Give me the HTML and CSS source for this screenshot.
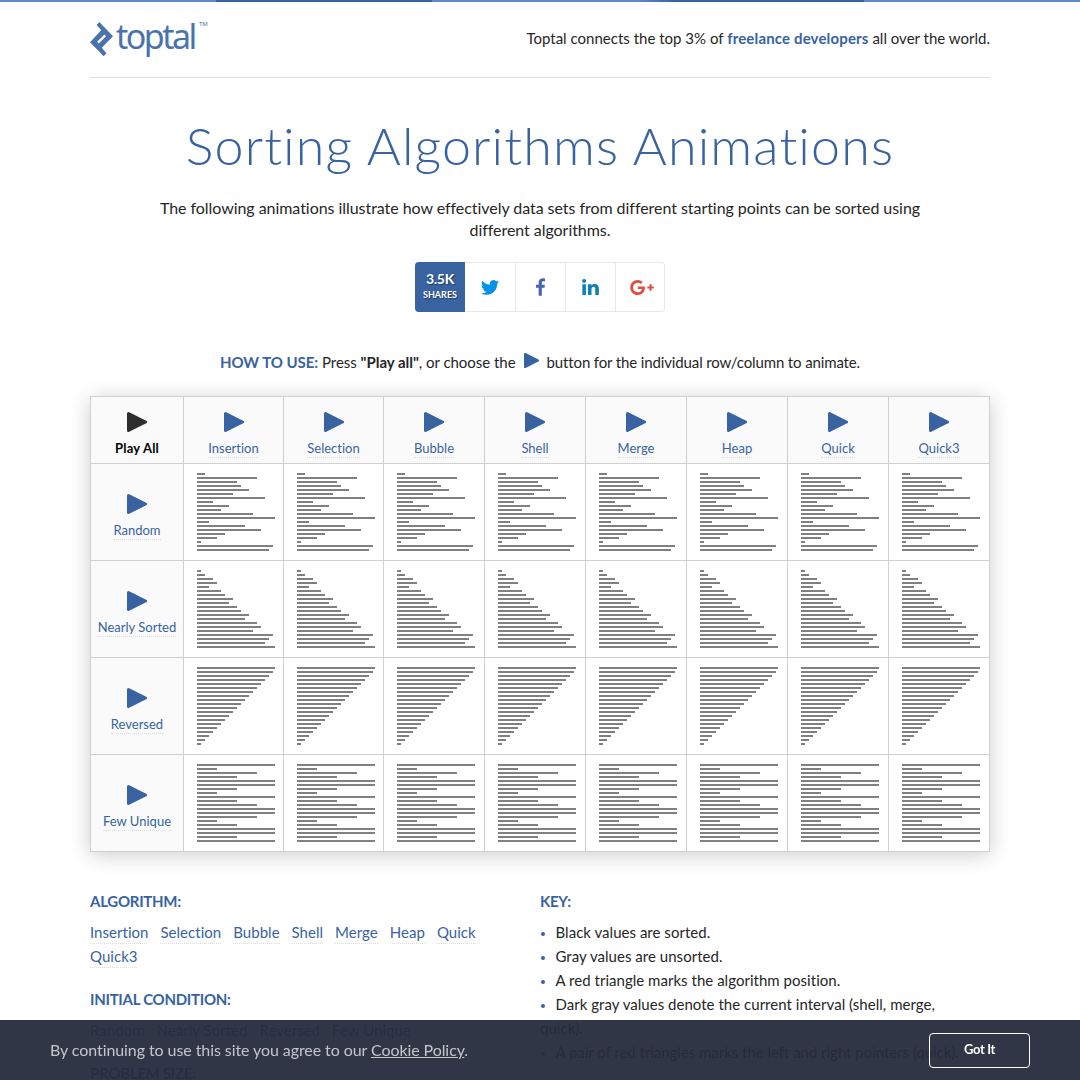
FILE: index.html
```html
<!DOCTYPE html>
<html lang="en">
<head>
<meta charset="utf-8">
<title>Sorting Algorithms Animations</title>
<link rel="stylesheet" href="styles.css">
</head>
<body>
<svg class="defs" aria-hidden="true">
  <symbol id="play" viewBox="0 0 20 20"><path d="M1.5 1.5 18.5 10 1.5 18.5Z" fill="currentColor" stroke="currentColor" stroke-width="3" stroke-linejoin="round"/></symbol>
</svg>
<div class="stripe"></div>
<div class="page">
  <header class="header">
    <a class="logo">
      <svg class="logo-mark" viewBox="0 0 23 35"><path fill-rule="evenodd" d="M9.3 0 23 14.3 11.8 25.7 16.4 31.200 13.700 34.200 0 20.200 11.200 8.300 6.600 3Z M14.500 12.500 7.100 19.800 8.700 21.500 16 14.200Z"/></svg>
      <span class="logo-word">toptal</span><span class="logo-tm">TM</span>
    </a>
    <p class="tagline">Toptal connects the top 3% of <b>freelance developers</b> all over the world.</p>
  </header>

  <h1>Sorting Algorithms Animations</h1>
  <p class="intro">The following animations illustrate how effectively data sets from different starting points can be sorted using<br>different algorithms.</p>

  <div class="share">
    <div class="share-count"><b>3.5K</b><span>SHARES</span></div>
    <a class="tw"><svg width="18" height="15" viewBox="0 2.25 24 19.5"><path d="M23.953 4.570a10 10 0 01-2.825.775 4.958 4.958 0 002.163-2.723c-.951.555-2.005.959-3.127 1.184a4.920 4.920 0 00-8.384 4.482C7.690 8.095 4.067 6.130 1.640 3.162a4.822 4.822 0 00-.666 2.475c0 1.710.870 3.213 2.188 4.096a4.904 4.904 0 01-2.228-.616v.060a4.923 4.923 0 003.946 4.827 4.996 4.996 0 01-2.212.085 4.936 4.936 0 004.604 3.417 9.867 9.867 0 01-6.102 2.105c-.390 0-.779-.023-1.170-.067a13.995 13.995 0 007.557 2.209c9.053 0 13.998-7.496 13.998-13.985 0-.210 0-.420-.015-.630A9.935 9.935 0 0024 4.590z"/></svg></a>
    <a class="fb"><svg width="9" height="18" viewBox="95 0 864 1664"><path d="M959 12v264h-157q-86 0-116 36t-30 108v189h293l-39 296h-254v759h-306v-759h-255v-296h255v-218q0-186 104-288.500t277-102.500q147 0 228 12z"/></svg></a>
    <a class="li"><svg width="17" height="16" viewBox="0 148 1536 1468"><path d="M349 625v991h-330v-991h330zm21-306q1 73-50.500 122t-135.500 49h-2q-82 0-132-49t-50-122q0-74 51.500-122.500t134.500-48.500 133 48.500 51 122.500zm1166 729v568h-329v-530q0-105-40.500-164.500t-126.500-59.500q-63 0-105.500 34.500t-63.500 85.500q-11 30-11 81v553h-329q2-399 2-647t-1-296l-1-48h329v144h-2q20-32 41-56t56.500-52 87-43.500 114.500-15.500q171 0 275 113.500t104 332.500z"/></svg></a>
    <a class="gp"><svg width="24" height="15" viewBox="0 163 2304 1466"><path d="M1437 913q0 208-87 370.500t-248 254-369 91.500q-149 0-285-58t-234-156-156-234-58-285 58-285 156-234 234-156 285-58q286 0 491 192l-199 191q-117-113-292-113-123 0-227.500 62t-165.500 168.500-61 232.500 61 232.500 165.500 168.500 227.500 62q83 0 152.500-23t114.500-57.500 78.500-78.500 49-83 21.500-74h-416v-252h692q12 63 12 122zm867-122v210h-209v209h-210v-209h-209v-210h209v-209h210v209h209z"/></svg></a>
  </div>

  <p class="howto"><span class="how1"><b class="accent">HOW TO USE:</b> Press <b>"Play all"</b>, or choose the</span><svg class="howto-play"><use href="#play"/></svg><span class="how2">button for the individual row/column to animate.</span></p>

  <div class="grid" id="grid">
    <div class="head all"><svg class="play"><use href="#play"/></svg><b>Play All</b></div>
  </div>

  <div class="info">
    <section class="links">
      <h2>ALGORITHM:</h2>
      <p><a>Insertion</a><a>Selection</a><a>Bubble</a><a>Shell</a><a>Merge</a><a>Heap</a><a>Quick</a><a>Quick3</a></p>
      <h2>INITIAL CONDITION:</h2>
      <p><a>Random</a><a>Nearly Sorted</a><a>Reversed</a><a>Few Unique</a></p>
      <h2>PROBLEM SIZE:</h2>
    </section>
    <section class="key">
      <h2>KEY:</h2>
      <ul>
        <li>Black values are sorted.</li>
        <li>Gray values are unsorted.</li>
        <li>A red triangle marks the algorithm position.</li>
        <li>Dark gray values denote the current interval (shell, merge, quick).</li>
        <li class="long">A pair of red triangles marks the left and right pointers (quick).</li>
      </ul>
    </section>
  </div>
</div>

<div class="cookie">
  <p>By continuing to use this site you agree to our <a>Cookie Policy</a>.</p>
  <button>Got It</button>
</div>
<script src="grid.js"></script>
</body>
</html>
```
FILE: styles.css
```css
* { box-sizing: border-box; }
body {
  margin: 0;
  background: #fff;
  color: #262626;
  font: 15px/24px Lato, "Liberation Sans", sans-serif;
  font-variant-ligatures: none;
}
html { scrollbar-width: none; }
p, h1, h2, ul { margin: 0; padding: 0; }
.defs { position: absolute; width: 0; height: 0; }

.stripe {
  height: 2px;
  background: linear-gradient(90deg, #5f88c8 0 20%, #3863a0 20% 40%, #5f88c8 40% 59%, #3863a0 62.5% 80%, #5f88c8 80%);
}
.page { width: 900px; margin: 0 auto; }

.header {
  display: flex;
  justify-content: space-between;
  align-items: flex-start;
  height: 76px;
  border-bottom: 1px solid #ddd;
}
.logo { display: flex; align-items: flex-start; color: #4a73ad; }
.logo-mark { width: 23px; height: 35px; margin-top: 20px; fill: #4a73ad; }
.logo-word {
  margin: 10px 0 0 3px;
  font: 400 34px/48px "Noto Sans", sans-serif;
  letter-spacing: -2.5px;
}
.logo-tm { margin: 18px 0 0 4px; font: 6px/8px "Noto Sans", sans-serif; }
.tagline { margin-top: 24px; letter-spacing: 0.01px; }
.tagline b, .accent { color: #3863a0; }
.tagline b { letter-spacing: 0.15px; }

h1 {
  margin-top: 37px;
  color: #3863a0;
  font: 300 52px/60px Lato, sans-serif;
  letter-spacing: 1.15px;
  text-align: center;
  white-space: nowrap;
}
.intro {
  margin-top: 22px;
  font-size: 16px;
  line-height: 22px;
  letter-spacing: -0.05px;
  text-align: center;
}

.share {
  display: flex;
  width: 250px;
  height: 50px;
  margin: 21px auto 0;
  border: 1px solid #e8e8e8;
  border-left: 0;
  border-radius: 4px;
}
.share-count {
  display: flex;
  flex-direction: column;
  align-items: center;
  width: 50px;
  height: 50px;
  margin-top: -1px;
  padding-top: 8px;
  border-radius: 4px 0 0 4px;
  background: #3863a0;
  color: #fff;
  text-shadow: 1px 1px 1px rgba(0, 0, 0, 0.4);
}
.share-count b { font-size: 14px; line-height: 17px; letter-spacing: -0.3px; }
.share-count span { font-size: 9px; line-height: 15px; font-weight: 700; }
.share a {
  display: flex;
  width: 50px;
  align-items: center;
  justify-content: center;
  border-left: 1px solid #e8e8e8;
}
.share .share-count + a { border-left: 0; }
.tw { fill: #0492e6; }
.fb { fill: #4a63b5; }
.li { fill: #0f7fb8; }
.share .gp { width: 49px; padding-left: 4px; fill: #dd4f43; }

.howto { display: flex; justify-content: center; margin-top: 38px; }
.how1 { letter-spacing: -0.03px; }
.how2 { letter-spacing: -0.13px; }
.howto-play { width: 15px; height: 15px; margin: 3px 8px 0 8px; color: #3863a0; }

.grid {
  display: grid;
  grid-template-columns: 92px 99px 99px repeat(6, 100px);
  grid-template-rows: 66px repeat(4, 96px);
  gap: 1px;
  margin-top: 22px;
  border: 1px solid #d0d0d0;
  background: #d0d0d0;
  box-shadow: 0 3px 20px rgba(0, 0, 0, 0.2);
}
.head, .side {
  display: flex;
  flex-direction: column;
  align-items: center;
  padding-top: 15px;
  background: #fafafa;
  color: #3863a0;
  font-size: 13px;
  line-height: 16px;
}
.side { padding-top: 30px; }
.all { color: #2d2d2d; }
.play { width: 20px; height: 20px; margin-bottom: 8px; }
.head b { color: #000; letter-spacing: 0.2px; }
.head span, .side span {
  padding-bottom: 1px;
  border-bottom: 1px dotted #ddd;
}
.cell { padding: 9px 0 0 13px; background: #fff; }
.cell svg { display: block; width: 78px; height: 78px; fill: #808080; }

.info { display: flex; height: 192px; margin-top: 37px; }
.links, .key { width: 450px; }
.links { padding-right: 50px; }
h2 {
  color: #3863a0;
  font-size: 15px;
  line-height: 24px;
  letter-spacing: -0.27px;
}
.links p { display: flex; flex-wrap: wrap; column-gap: 12px; margin: 7px 0 19px; }
.links a {
  height: 24px;
  color: #3863a0;
  letter-spacing: 0.03px;
  background: repeating-linear-gradient(90deg, #ddd 0 1px, transparent 1px 2px) 0 23px / 100% 1px no-repeat;
}
.key ul { margin-top: 7px; width: 420px; list-style: none; }
.key li { letter-spacing: 0.03px; }
.key .long { white-space: nowrap; letter-spacing: -0.03px; }
.key li::before {
  content: "";
  display: inline-block;
  width: 4px;
  height: 4px;
  margin: 0 10.500px 2px 1px;
  border-radius: 50%;
  background: #3863a0;
}

.cookie {
  position: fixed;
  left: 0;
  right: 0;
  bottom: 0;
  display: flex;
  align-items: center;
  justify-content: space-between;
  height: 60px;
  padding: 0 50px;
  background: rgba(38, 43, 60, 0.95);
  color: #c3c5c9;
  font-size: 16px;
  letter-spacing: -0.08px;
}
.cookie p { margin-top: -1px; }
.cookie a { text-decoration: underline; }
.cookie button {
  width: 101px;
  height: 35px;
  padding: 0 0 2px;
  border: 1px solid #fff;
  border-radius: 4px;
  background: transparent;
  color: #fff;
  font: 700 13px/20px Lato, sans-serif;
  letter-spacing: -0.35px;
}
```
FILE: grid.js
```js
const columns = ["Insertion", "Selection", "Bubble", "Shell", "Merge", "Heap", "Quick", "Quick3"];
const rows = [
  ["Random", [8, 60, 40, 44, 52, 36, 68, 16, 32, 24, 56, 78, 12, 48, 64, 28, 20, 4, 76, 72]],
  ["Nearly Sorted", [4, 8, 16, 20, 12, 24, 28, 36, 32, 40, 44, 52, 48, 60, 64, 56, 76, 72, 68, 78]],
  ["Reversed", [78, 76, 72, 68, 64, 60, 56, 52, 48, 44, 40, 36, 32, 28, 24, 20, 16, 12, 8, 4]],
  ["Few Unique", [78, 20, 60, 40, 78, 78, 40, 20, 78, 40, 60, 78, 78, 60, 20, 40, 78, 78, 40, 78]]
];
const label = (kind, text) =>
  `<div class="${kind}"><svg class="play"><use href="#play"/></svg><span>${text}</span></div>`;
const bars = (values) =>
  `<div class="cell"><svg viewBox="0 0 78 78">${values
    .map((w, i) => `<rect y="${i * 4}" width="${w}" height="2"/>`)
    .join("")}</svg></div>`;

let html = columns.map((c) => label("head", c)).join("");
for (const [name, values] of rows) {
  html += label("side", name) + columns.map(() => bars(values)).join("");
}
document.getElementById("grid").insertAdjacentHTML("beforeend", html);
```
